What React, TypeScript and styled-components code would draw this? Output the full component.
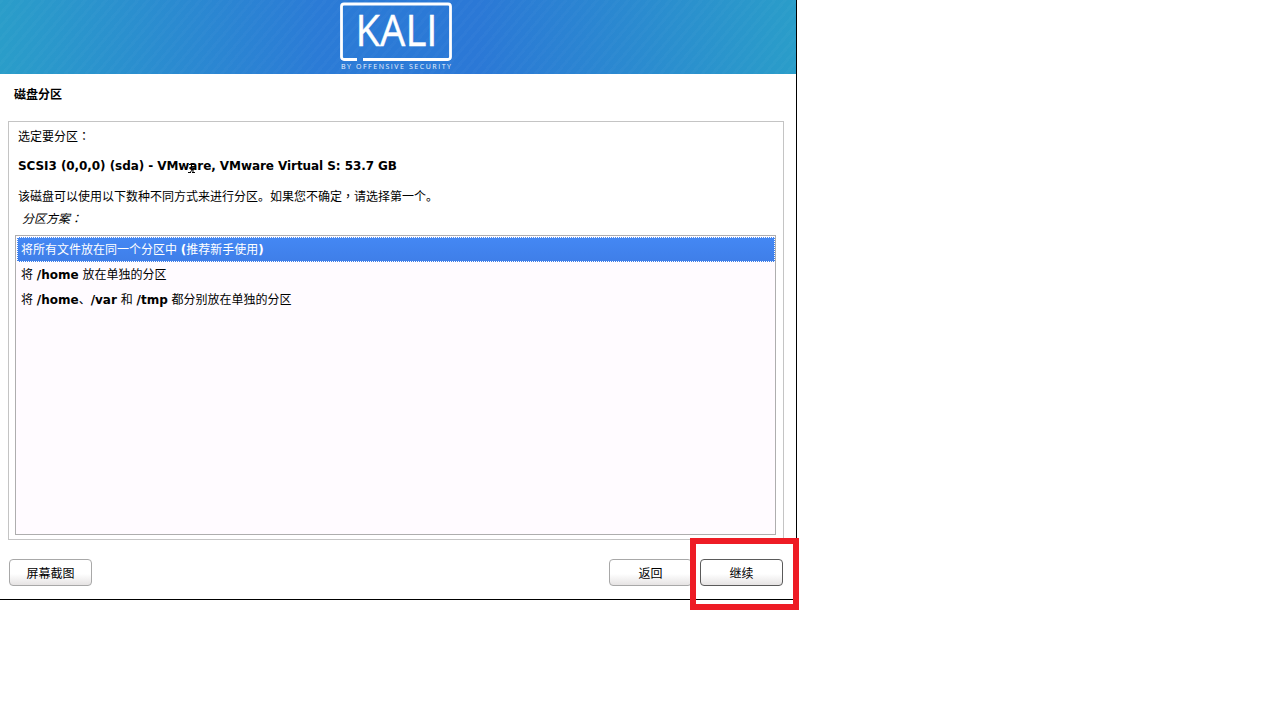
import React from 'react'
import styled, { createGlobalStyle } from 'styled-components'

const GlobalStyle = createGlobalStyle`
  html, body {
    margin: 0;
    padding: 0;
    background: #ffffff;
  }
  body {
    font-family: "DejaVu Sans", "Noto Sans CJK SC", sans-serif;
    font-size: 12px;
    color: #000000;
  }
`

const Page = styled.div`
  position: relative;
  width: 1275px;
  height: 709px;
  overflow: hidden;
`

const Installer = styled.div`
  width: 797px;
  height: 600px;
  box-sizing: border-box;
  border-right: 1px solid #000000;
  border-bottom: 1px solid #000000;
  display: flex;
  flex-direction: column;
`

const Banner = styled.header`
  height: 74px;
  flex: none;
  display: flex;
  justify-content: center;
  background:
    repeating-linear-gradient(130deg, rgba(255, 255, 255, 0.018) 0 3px, rgba(255, 255, 255, 0) 3px 8px),
    linear-gradient(90deg, #2a9dc9 0%, #2b7bd6 40%, #2b78d6 60%, #2a9dc9 100%);
`

const Title = styled.h1`
  margin: 0;
  height: 47px;
  flex: none;
  box-sizing: border-box;
  padding: 13px 0 0 14px;
  font-size: 12px;
  line-height: 17px;
  font-weight: 700;
`

const Panel = styled.section`
  width: 776px;
  height: 419px;
  flex: none;
  margin-left: 8px;
  box-sizing: border-box;
  border: 1px solid #c4c4c4;
  padding: 0 7px 0 6px;
  display: flex;
  flex-direction: column;
`

const Label = styled.div`
  padding-left: 3px;
  height: 26px;
  line-height: 27px;
  font-size: 12px;
  flex: none;
`

const Disk = styled.div`
  padding-left: 3px;
  height: 30px;
  margin-top: 3px;
  line-height: 30px;
  font-size: 12px;
  font-weight: 700;
  letter-spacing: -0.07px;
  flex: none;
`

const Hint = styled.div`
  padding-left: 3px;
  height: 22px;
  margin-top: 4px;
  line-height: 22px;
  font-size: 12px;
  flex: none;
`

const SchemeLabel = styled.div`
  padding-left: 7px;
  height: 22px;
  line-height: 22px;
  font-size: 12px;
  font-style: italic;
  flex: none;
`

const Punct = styled.span`
  font-family: "Noto Sans CJK TC", sans-serif;
`

const List = styled.ul`
  list-style: none;
  margin: 6px 0 0;
  padding: 1px 0 1px 1px;
  width: 761px;
  height: 300px;
  box-sizing: border-box;
  border: 1px solid #aeaeae;
  background: #fffbff;
  flex: none;
`

const Option = styled.li<{ $selected?: boolean }>`
  height: 25px;
  box-sizing: border-box;
  padding-left: 4px;
  line-height: 26px;
  font-size: 12px;
  color: ${({ $selected }) => ($selected ? '#ffffff' : '#000000')};
  background: ${({ $selected }) =>
    $selected ? 'linear-gradient(180deg, #4488f4 0%, #3f7ee8 100%)' : 'transparent'};
  outline: ${({ $selected }) => ($selected ? '1px dotted #ffffff' : 'none')};
  outline-offset: -1px;
  b {
    font-weight: 700;
  }
`

const Actions = styled.footer`
  display: flex;
  align-items: center;
  justify-content: space-between;
  margin-top: 19px;
  padding: 0 13px 0 9px;
`

const RightActions = styled.div`
  display: flex;
  gap: 8px;
`

const Button = styled.button<{ $focused?: boolean }>`
  width: 83px;
  height: 27px;
  padding: 0;
  box-sizing: border-box;
  border: 1px solid ${({ $focused }) => ($focused ? '#5a5a5a' : '#a8a8a8')};
  border-radius: 4px;
  background: linear-gradient(180deg, #ffffff 0%, #ffffff 55%, #e6e3e3 100%);
  font-family: "DejaVu Sans", "Noto Sans CJK SC", sans-serif;
  font-size: 12px;
  color: #000000;
`

const Highlight = styled.div`
  position: absolute;
  left: 690px;
  top: 538px;
  width: 109px;
  height: 72px;
  box-sizing: border-box;
  border: 6px solid #ee1c25;
  pointer-events: none;
`

const Cursor = styled.svg`
  position: absolute;
  left: 188px;
  top: 164px;
`

const KaliLogo = () => (
  <svg width="116" height="74" viewBox="0 0 116 74">
    <path
      d="M17 59.500H4a2.500 2.500 0 0 1-2.500-2.500V6.500A2.500 2.500 0 0 1 4 4h104a2.500 2.500 0 0 1 2.500 2.500V57a2.500 2.500 0 0 1-2.500 2.500H23"
      fill="none"
      stroke="#ffffff"
      strokeWidth="2.800"
    />
    <text
      x="56.500"
      y="46"
      fill="#ffffff"
      stroke="#ffffff"
      strokeWidth="0.4"
      textAnchor="middle"
      fontFamily="'Open Sans', sans-serif"
      fontSize="43"
      textLength="82"
      lengthAdjust="spacingAndGlyphs"
    >
      KALI
    </text>
    <text
      x="56"
      y="69"
      fill="#eef4fc"
      textAnchor="middle"
      fontFamily="'Open Sans', sans-serif"
      fontSize="7"
      textLength="110"
      lengthAdjust="spacing"
    >
      BY OFFENSIVE SECURITY
    </text>
  </svg>
)

export default function App() {
  return (
    <Page>
      <GlobalStyle />
      <Installer>
        <Banner>
          <KaliLogo />
        </Banner>
        <Title>磁盘分区</Title>
        <Panel>
          <Label>选定要分区<Punct>：</Punct></Label>
          <Disk>SCSI3 (0,0,0) (sda) - VMware, VMware Virtual S: 53.7 GB</Disk>
          <Hint>该磁盘可以使用以下数种不同方式来进行分区。如果您不确定<Punct>，</Punct>请选择第一个。</Hint>
          <SchemeLabel>分区方案<Punct>：</Punct></SchemeLabel>
          <List>
            <Option $selected>将所有文件放在同一个分区中 <b>(</b>推荐新手使用<b>)</b></Option>
            <Option>
              将 <b>/home</b> 放在单独的分区
            </Option>
            <Option>
              将 <b>/home</b>、<b>/var</b> 和 <b>/tmp</b> 都分别放在单独的分区
            </Option>
          </List>
        </Panel>
        <Actions>
          <Button>屏幕截图</Button>
          <RightActions>
            <Button>返回</Button>
            <Button $focused>继续</Button>
          </RightActions>
        </Actions>
      </Installer>
      <Cursor width="7" height="10" viewBox="0 0 7 10">
        <path d="M1 .5h5M3.500 .5v3M1 4h5L2 8.500M5 4v4.500M0 8.500h3M4 8.500h3" fill="none" stroke="#000" strokeWidth="1" />
      </Cursor>
      <Highlight />
    </Page>
  )
}
